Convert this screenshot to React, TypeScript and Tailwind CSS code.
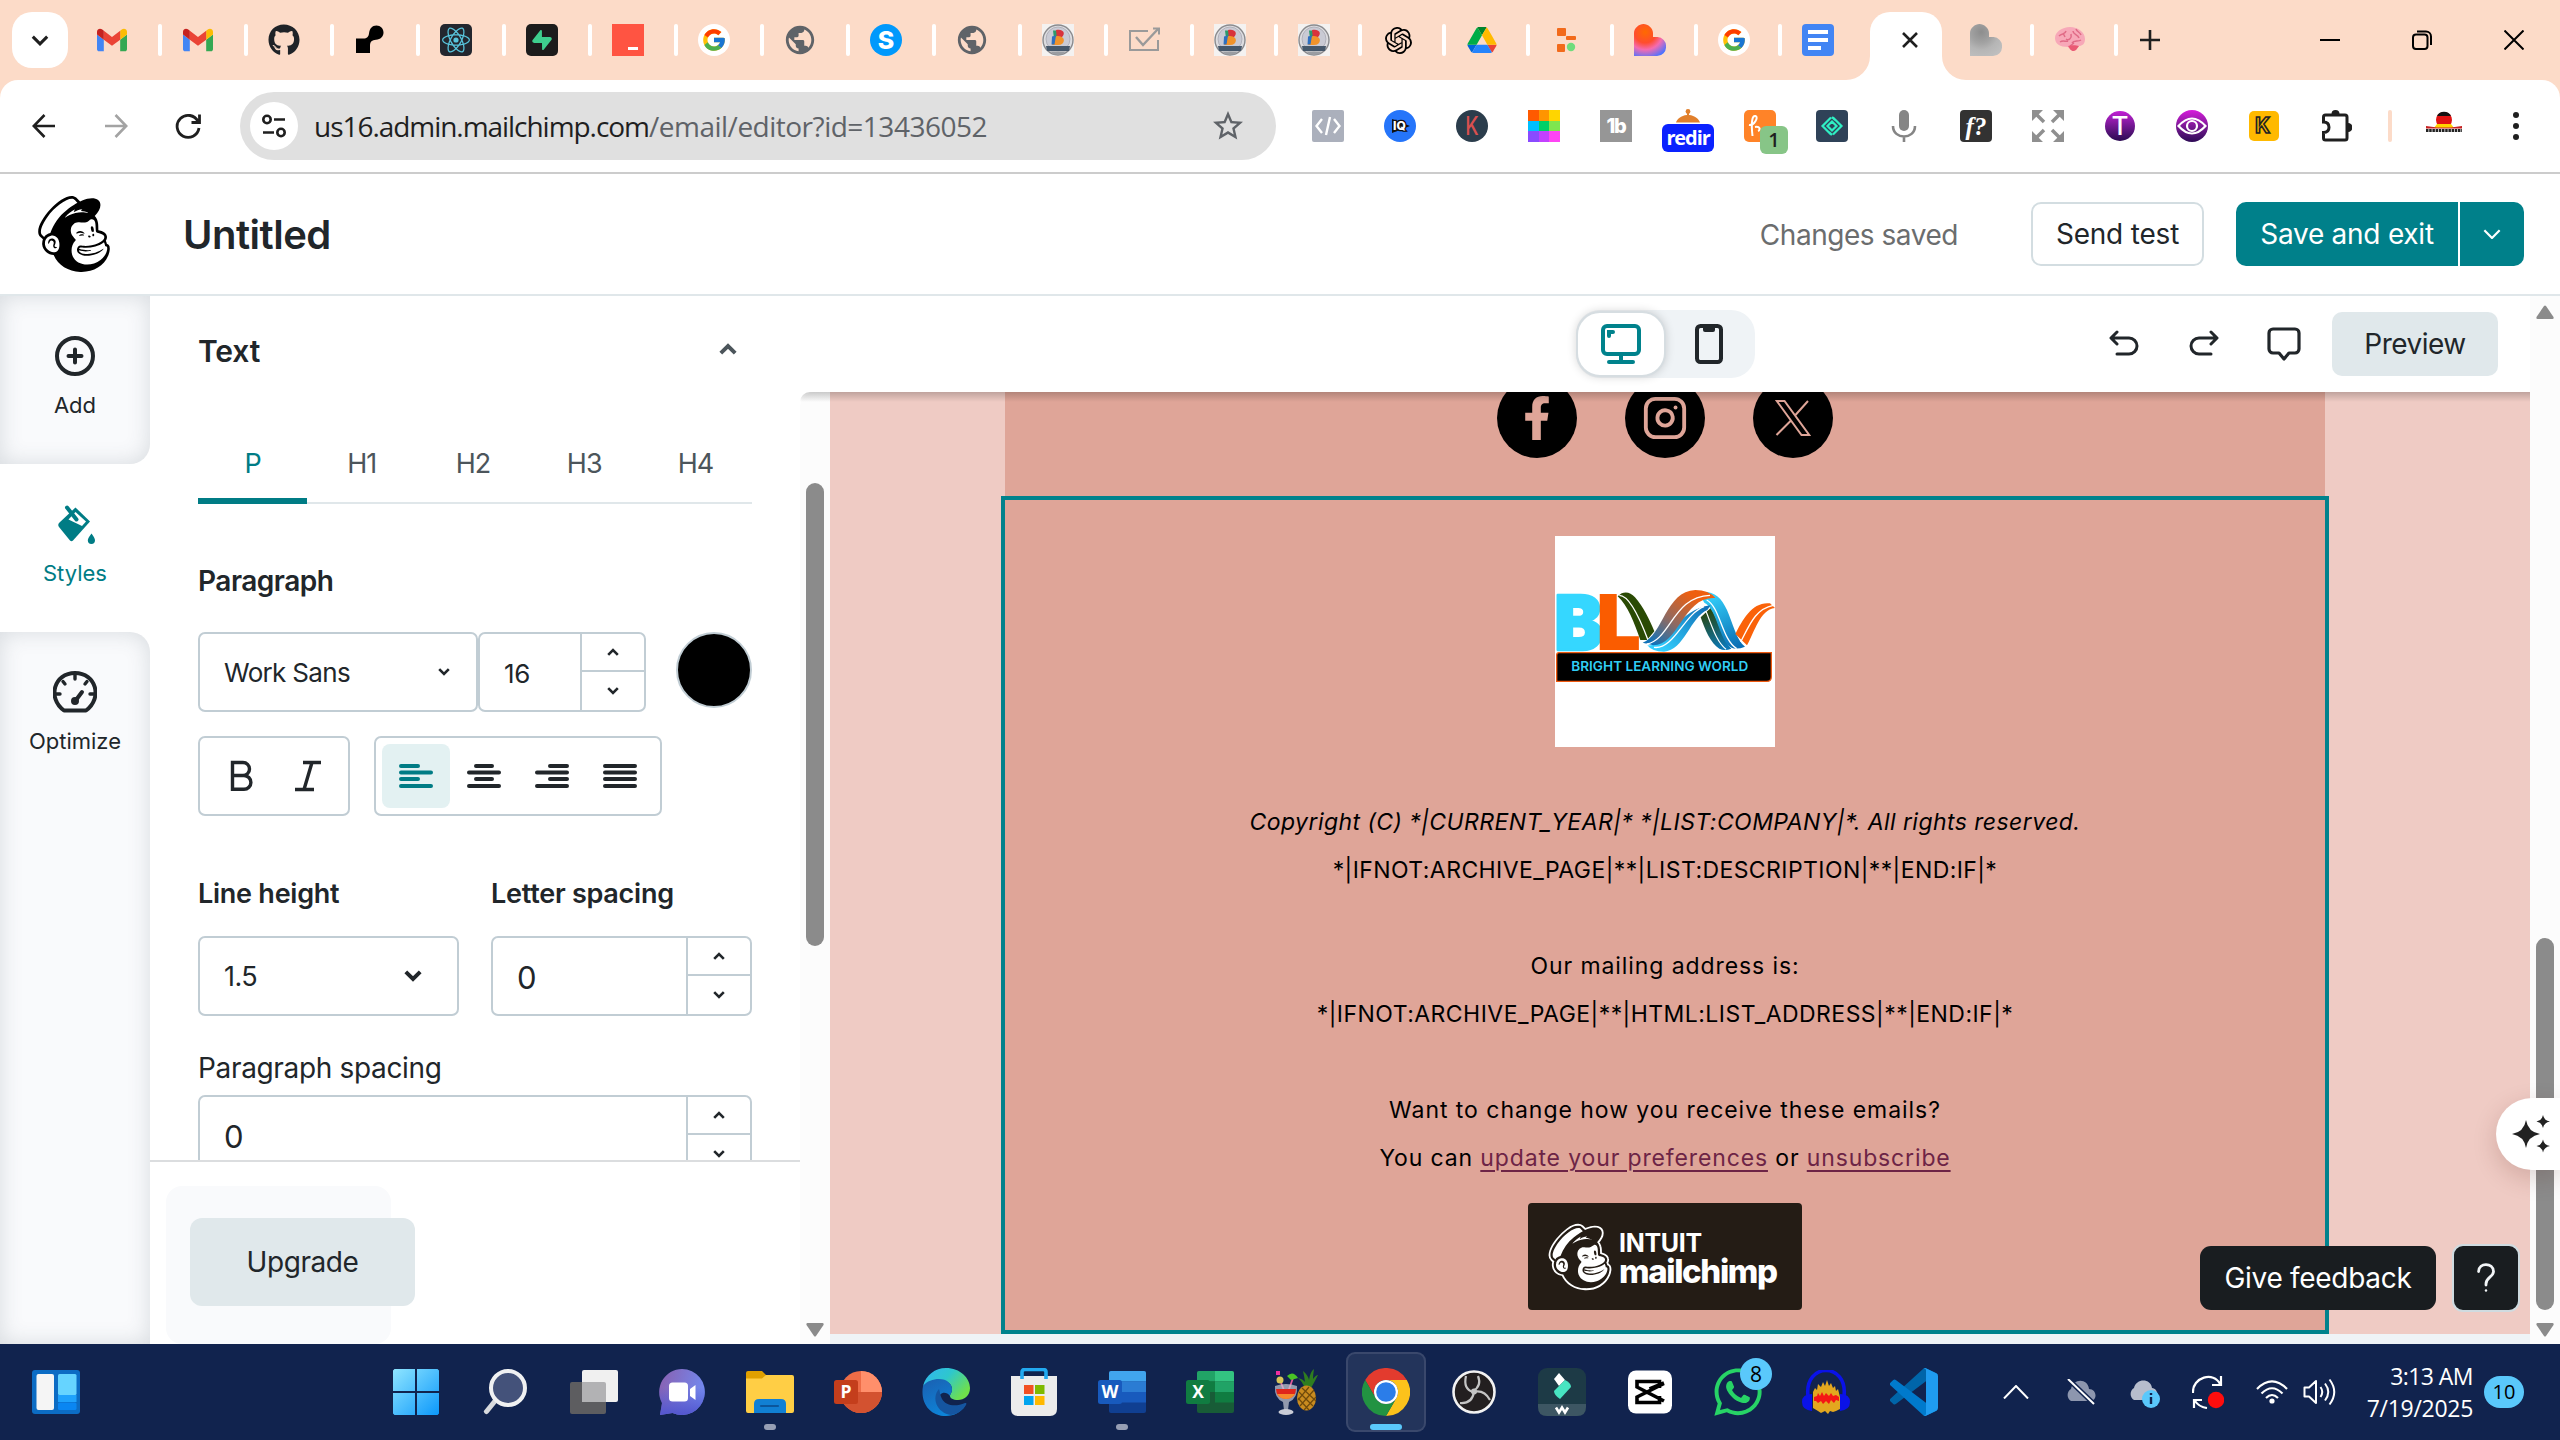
import React from 'react';
import { SiMailchimp, SiReact, SiSupabase, SiOpenai } from 'react-icons/si';
import { FaGithub, FaWhatsapp, FaFacebookF } from 'react-icons/fa';
import { FcGoogle } from 'react-icons/fc';
import { MdPublic, MdStarBorder } from 'react-icons/md';
import { Instagram } from 'lucide-react';

type Kids = { children?: React.ReactNode };

/* ---------- Tab favicons ---------- */

const Gmail = () => (
  <svg viewBox="52 42 88 66" className="h-[24px] w-[30px]">
    <path fill="#4285f4" d="M58 108h14V74L52 59v43c0 3.32 2.69 6 6 6" />
    <path fill="#34a853" d="M120 108h14c3.32 0 6-2.69 6-6V59l-20 15" />
    <path fill="#fbbc04" d="M120 48v26l20-15v-8c0-7.42-8.47-11.65-14.4-7.2" />
    <path fill="#ea4335" d="M72 74V48l24 18 24-18v26L96 92" />
    <path fill="#c5221f" d="M52 51v8l20 15V48l-5.6-4.2c-5.94-4.45-14.4-.22-14.4 7.2" />
  </svg>
);

const Keyhole = () => (
  <svg viewBox="0 0 32 32" className="size-8">
    <path d="M2 14.500h7.500c3.500 0 5-1.500 5.500-5 .5-5 3-8 7.500-8 4 0 7 3 7 7s-3 7-7.500 7.200c-4 .2-6 2-6 5.800V29H2z" fill="#000" />
  </svg>
);

const GoogleRound = () => (
  <div className="flex size-8 items-center justify-center rounded-full bg-white">
    <FcGoogle size={26} />
  </div>
);

const Badge3d = () => (
  <svg viewBox="0 0 32 32" className="size-8">
    <rect width="32" height="32" fill="#f4f2f1" />
    <circle cx="16" cy="16" r="15" fill="#dcdce0" stroke="#8a8a8d" strokeWidth="1.400" />
    <circle cx="16" cy="15" r="12" fill="#c9cad4" stroke="#a9aab2" strokeWidth="0.800" />
    <path d="M11 6.500h5v5l-4 3z" fill="#2c9a6b" />
    <path d="M14 6c7-1.500 10 3 6 7l-5 2z" fill="#d8333c" />
    <path d="M15 12c9-1 9 9 1 9h-6l3-8z" fill="#f0932b" />
    <path d="M10 12.500l4-1-1.500 9h-3z" fill="#2d6fc0" />
    <path d="M4 22h24l-1 5H5z" fill="#46586b" />
    <path d="M8 27.500h16l-4 3h-8z" fill="#9a9da2" />
  </svg>
);

const CheckArrow = () => (
  <svg viewBox="0 0 32 32" className="size-8" fill="none" stroke="#9a9a9a" strokeWidth="2">
    <path d="M20 7H2v19h28V16" />
    <path d="M8 13l7 8L30 5" strokeWidth="2.400" />
    <path d="M25 4.500h6v6" />
  </svg>
);

const Drive = () => (
  <svg viewBox="0 0 87.3 78" className="h-[26px] w-[30px]">
    <path d="m6.600 66.850 3.850 6.650c.8 1.400 1.950 2.500 3.300 3.300l13.750-23.800h-27.500c0 1.550.4 3.100 1.200 4.500z" fill="#0066da" />
    <path d="m43.650 25-13.750-23.800c-1.350.8-2.500 1.900-3.300 3.300l-25.400 44a9.060 9.060 0 0 0 -1.200 4.500h27.500z" fill="#00ac47" />
    <path d="m73.550 76.800c1.350-.8 2.500-1.900 3.300-3.300l1.600-2.750 7.650-13.250c.8-1.400 1.200-2.950 1.200-4.500h-27.502l5.852 11.500z" fill="#ea4335" />
    <path d="m43.650 25 13.750-23.800c-1.350-.8-2.900-1.200-4.500-1.200h-18.500c-1.600 0-3.150.45-4.500 1.200z" fill="#00832d" />
    <path d="m59.800 53h-32.300l-13.750 23.800c1.350.8 2.900 1.200 4.500 1.200h50.800c1.600 0 3.150-.45 4.500-1.200z" fill="#2684fc" />
    <path d="m73.400 26.500-12.700-22c-.8-1.400-1.950-2.500-3.300-3.300l-13.750 23.800 16.150 28h27.450c0-1.550-.4-3.100-1.200-4.500z" fill="#ffba00" />
  </svg>
);

const Blocks = () => (
  <svg viewBox="0 0 32 32" className="size-8">
    <rect x="7" y="4" width="9" height="8" rx="1" fill="#f26a1b" />
    <rect x="16" y="12" width="10" height="4" rx="1" fill="#f26a1b" />
    <rect x="7" y="20" width="8" height="8" rx="1" fill="#f26a1b" />
    <circle cx="21" cy="23" r="4.200" fill="#6fdc7c" />
  </svg>
);

const HeartMark = ({ gray }: { gray?: boolean }) => (
  <svg viewBox="0 0 32 32" className="size-8">
    <defs>
      <radialGradient id={gray ? 'hg' : 'hc'} cx="0.35" cy="0.250" r="0.85">
        <stop offset="0" stopColor={gray ? '#8d8d8d' : '#ff6a00'} />
        <stop offset="0.4" stopColor={gray ? '#a2a2a2' : '#ff4d2e'} />
        <stop offset="0.65" stopColor={gray ? '#b5b5b5' : '#f56bb0'} />
        <stop offset="1" stopColor={gray ? '#bfbfbf' : '#4b73ff'} />
      </radialGradient>
    </defs>
    <path d="M0 9C0 4 5 0 9.500 0S19 4 19 9v4h4.500a9 9 0 0 1 8.500 9.500A9 9 0 0 1 23 32H0z" fill={gray ? 'url(#hg)' : 'url(#hc)'} />
  </svg>
);

const Docs = () => (
  <div className="flex size-8 flex-col justify-center gap-1 rounded-[4px] bg-[#4285f4] pl-1.5">
    <i className="h-1 w-5 bg-white" />
    <i className="h-1 w-5 bg-white" />
    <i className="h-1 w-[13px] bg-white" />
  </div>
);

const Brain = () => (
  <svg viewBox="0 0 32 32" className="size-8">
    <path d="M16 3c8 0 15 5 15 12 0 5-3 7-6 7l-3 4c-5 2-6-1-8-3C6 23 1 20 1 14 1 8 8 3 16 3z" fill="#f7a8b8" />
    <path d="M5 12c3-3 6-1 7-5M12 15c3 2 6-1 5-5M19 7c0 4 5 3 6 7M6 18c3-2 6 0 8-1M18 19c2-3 6-1 9-3M22 5c1 3 4 3 5 6M9 9l2 4M16 22l4-3" stroke="#e06a86" strokeWidth="1.500" fill="none" />
    <path d="M14 22c3-1 8-1 11 0l-3 4c-4 3-6-1-8-4z" fill="#ea5a74" />
  </svg>
);

const Tab = ({ wide, sep = true, children }: Kids & { wide?: boolean; sep?: boolean }) => (
  <div className={wide ? 'flex h-20 w-[86px] items-center pl-5' : 'flex h-20 w-[84px] items-center pl-5'}>
    <div className="flex size-8 items-center justify-center">{children}</div>
    {sep && <div className="ml-auto h-8 w-1 rounded-full bg-white" />}
  </div>
);

const TabStrip = () => (
  <div className="flex h-20 w-full shrink-0 bg-[#fcdbc8]">
    <div className="mt-3 ml-3 flex size-14 items-center justify-center rounded-[20px] bg-white">
      <svg viewBox="0 0 20 14" className="w-[18px]" fill="none" stroke="#1f1f1f" strokeWidth="3.400"><path d="M2 3l8 8 8-8" /></svg>
    </div>
    <div className="ml-2 flex">
      <Tab wide><Gmail /></Tab>
      <Tab wide><Gmail /></Tab>
      <Tab wide><FaGithub size={32} color="#1f2328" /></Tab>
      <Tab wide><Keyhole /></Tab>
      <Tab wide><div className="flex size-8 items-center justify-center rounded-[5px] bg-[#23272f]"><SiReact size={28} color="#58c4dc" /></div></Tab>
      <Tab wide><div className="flex size-8 items-center justify-center rounded-[5px] bg-[#1c1c1c]"><SiSupabase size={20} color="#3ecf8e" /></div></Tab>
      <Tab wide><div className="flex size-8 items-end justify-end bg-[#ff5442] pr-1.5 pb-1.5"><i className="h-[3px] w-2.5 bg-white" /></div></Tab>
      <Tab wide><GoogleRound /></Tab>
      <Tab wide><MdPublic size={34} color="#5f6368" className="shrink-0" /></Tab>
      <Tab wide><div className="flex size-8 items-center justify-center rounded-full bg-[#0099fc] font-['Inter'] text-[25px] leading-none font-extrabold text-white">S</div></Tab>
      <Tab wide><MdPublic size={34} color="#5f6368" className="shrink-0" /></Tab>
      <Tab wide><Badge3d /></Tab>
      <Tab wide><CheckArrow /></Tab>
      <Tab><Badge3d /></Tab>
      <Tab><Badge3d /></Tab>
      <Tab><SiOpenai size={27} color="#000" /></Tab>
      <Tab><Drive /></Tab>
      <Tab><Blocks /></Tab>
      <Tab><HeartMark /></Tab>
      <Tab><GoogleRound /></Tab>
      <Tab sep={false}><Docs /></Tab>
    </div>
    <div className="relative mt-3 mr-2 ml-1 flex h-[68px] w-[72px] items-start justify-center rounded-t-[20px] bg-white pt-5 pl-2">
      <svg viewBox="0 0 24 24" className="absolute bottom-0 -left-6 size-6" fill="#fff"><path d="M24 0V24H0A24 24 0 0 0 24 0Z" /></svg>
      <svg viewBox="0 0 24 24" className="absolute -right-6 bottom-0 size-6" fill="#fff"><path d="M0 0V24H24A24 24 0 0 1 0 0Z" /></svg>
      <svg viewBox="0 0 16 16" className="size-4" stroke="#1f1f1f" strokeWidth="2.600"><path d="M1 1l14 14M15 1L1 15" /></svg>
    </div>
    <Tab><HeartMark gray /></Tab>
    <Tab><Brain /></Tab>
    <div className="flex w-16 items-center justify-center">
      <svg viewBox="0 0 20 20" className="size-5" stroke="#1f1f1f" strokeWidth="2.600"><path d="M10 0v20M0 10h20" /></svg>
    </div>
    <div className="ml-auto flex *:flex *:w-[92px] *:items-center *:justify-center">
      <div><svg viewBox="0 0 20 20" className="size-5" stroke="#000" strokeWidth="2"><path d="M0 10h20" /></svg></div>
      <div><svg viewBox="0 0 20 20" className="size-5" fill="none" stroke="#000" strokeWidth="2"><rect x="1" y="4.500" width="14.500" height="14.500" rx="3" /><path d="M5 1.500h9a5 5 0 0 1 5 5V15" /></svg></div>
      <div><svg viewBox="0 0 20 20" className="size-5" stroke="#000" strokeWidth="2"><path d="M0.500 0.500l19 19M19.500 0.500l-19 19" /></svg></div>
    </div>
  </div>
);

/* ---------- Address bar ---------- */

const Cell = ({ children }: Kids) => <div className="flex h-full w-[72px] shrink-0 items-center justify-center">{children}</div>;

const RAINBOW = ['bg-[#ff5a00]', 'bg-[#ff9500]', 'bg-[#ffd500]', 'bg-[#00bfff]', 'bg-[#00d068]', 'bg-[#7ee64f]', 'bg-[#8a4bff]', 'bg-[#c341ff]', 'bg-[#ff45f5]'];

const AddressBar = () => (
  <div className="h-[94px] w-full shrink-0 bg-[#fcdbc8]">
    <div className="flex h-[94px] items-center rounded-t-[18px] border-b-2 border-[#ccc] bg-white pl-2">
      <Cell><svg viewBox="0 0 24 24" className="size-6" fill="none" stroke="#1f1f1f" strokeWidth="2.600"><path d="M23 12H2M12.500 1L1.800 12l10.700 11" /></svg></Cell>
      <Cell><svg viewBox="0 0 24 24" className="size-6" fill="none" stroke="#a3a3a3" strokeWidth="2.600"><path d="M1 12h21M11.500 1l10.700 11-10.700 11" /></svg></Cell>
      <Cell><svg viewBox="0 0 26 26" className="size-[26px]" fill="none" stroke="#1f1f1f" strokeWidth="2.800"><path d="M23 8.500A11 11 0 1 0 24 15M24.500 1.500v8h-8" /></svg></Cell>
      <div className="ml-4 flex h-[68px] w-[1036px] items-center rounded-full bg-[#e0e0e0] pl-2.5">
        <div className="flex size-12 items-center justify-center rounded-full bg-white">
          <svg viewBox="0 0 26 26" className="size-[26px]" fill="none" stroke="#1f1f1f" strokeWidth="2.600"><circle cx="6" cy="6.500" r="3.700" /><path d="M13 6.500h11M2 19.500h11" /><circle cx="20" cy="19.500" r="3.700" /></svg>
        </div>
        <div className="ml-4 font-['Open_Sans'] text-[28px] whitespace-nowrap text-[#5f6368]">
          <span className="tracking-[-1.04px] text-[#1f1f1f]">us16.admin.mailchimp.com</span><span className="tracking-[-0.5px]">/email/editor?id=13436052</span>
        </div>
        <MdStarBorder size={36} color="#5f6368" className="mr-[30px] ml-auto" />
      </div>
      <div className="ml-4 flex h-full">
        <Cell>
          <div className="flex size-8 items-center justify-center rounded-[2px] bg-[#abb0bc]">
            <svg viewBox="0 0 26 20" className="w-[26px]" fill="none" stroke="#fff" strokeWidth="2.400"><path d="M7 3L1.500 10 7 17M19 3l5.500 7L19 17M15 1l-4 18" /></svg>
          </div>
        </Cell>
        <Cell>
          <div className="flex size-8 items-center justify-center rounded-full bg-[#2575fa]">
            <svg viewBox="0 0 24 20" className="w-6"><path d="M4 3l18 7L4 17z" fill="#111" /><text x="5" y="14.200" fontFamily="Inter" fontWeight="800" fontSize="12" stroke="#111" strokeWidth="2.500" paintOrder="stroke" fill="#fff">IQ</text></svg>
          </div>
        </Cell>
        <Cell><div className="flex size-8 items-center justify-center rounded-full bg-[#2b3d4c] font-['Inter'] text-[26px] leading-none font-medium text-[#d9504f]"><span className="scale-x-75">K</span></div></Cell>
        <Cell><div className="grid size-8 grid-cols-3 grid-rows-3">{RAINBOW.map((c) => <i key={c} className={c} />)}</div></Cell>
        <Cell><div className="flex size-8 items-center justify-center bg-[#969696] font-['Inter'] text-[20px] leading-none font-extrabold tracking-[-1.4px] text-white">1b</div></Cell>
        <Cell>
          <div className="mt-[14px] flex h-12 flex-col items-center">
            <svg viewBox="0 0 26 15" className="h-[15px] w-[26px]" fill="#e17f2b"><circle cx="13" cy="2.500" r="2.400" /><path d="M12 3h2v3c6 .5 10 4 11 7.500H1C2 10 6 6.500 12 6z" /></svg>
            <div className="flex h-7 w-[52px] items-center justify-center rounded-[6px] bg-[#0a22ff] font-['Open_Sans'] text-[20px] leading-none font-bold tracking-[-1.1px] text-white">redir</div>
          </div>
        </Cell>
        <Cell>
          <div className="relative flex size-8 items-center justify-center rounded-[5px] bg-[#ff8328]">
            <svg viewBox="0 0 20 24" className="mr-2 h-6" fill="none" stroke="#fff" strokeWidth="2"><path d="M3 11c5 1 10-8 6.500-9S5 9 6.500 22M9 13c5-1 6 3 3 4" /></svg>
            <div className="absolute top-4 left-4 flex size-7 items-center justify-center rounded-[6px] bg-[#87c587] font-['Open_Sans'] text-[20px] leading-none font-semibold text-[#1f1f1f]">1</div>
          </div>
        </Cell>
        <Cell>
          <div className="flex size-8 items-center justify-center rounded-[4px] bg-[#2f4258]">
            <svg viewBox="0 0 24 24" className="size-6" fill="none" stroke="#2ff0c4" strokeWidth="2.200"><path d="M11 3.500L2.500 12l8.500 8.500M13 3.500l8.500 8.500-8.500 8.500M12 7.500L7.500 12l4.500 4.500 4.500-4.500zM12 3l3 3M12 21l-3-3" /></svg>
          </div>
        </Cell>
        <Cell><svg viewBox="0 0 26 32" className="h-8" fill="none" stroke="#858585" strokeWidth="2.600"><rect x="8" y="0" width="10" height="21" rx="5" fill="#858585" stroke="none" /><path d="M2 16c0 14 22 14 22 0M13 26v6" /></svg></Cell>
        <Cell><div className="flex size-8 items-center justify-center rounded-[4px] bg-[#323232] font-['Liberation_Serif'] text-[25px] leading-none font-bold text-white italic">f?</div></Cell>
        <Cell>
          <svg viewBox="0 0 32 32" className="size-8" fill="#8f8f8f" stroke="#8f8f8f" strokeWidth="3.500">
            <path d="M4 4l8 8M28 4l-8 8M4 28l8-8M28 28l-8-8" />
            <path stroke="none" d="M0 0h11L0 11zM32 0v11L21 0zM0 32V21l11 11zM32 32H21l11-11z" />
          </svg>
        </Cell>
        <Cell><div className="flex size-[30px] items-center justify-center rounded-full bg-linear-to-b from-[#c31fd6] to-[#2b0a52] font-['Inter'] text-[26px] leading-none font-medium text-white">T</div></Cell>
        <Cell>
          <div className="flex size-8 items-center justify-center rounded-full bg-linear-to-b from-[#d819dd] to-[#2d0a55]">
            <svg viewBox="0 0 30 18" className="w-[30px]" fill="none" stroke="#fff" strokeWidth="2.200"><path d="M1.500 9Q15-6 28.500 9 15 24 1.500 9z" /><circle cx="15" cy="9" r="5" /></svg>
          </div>
        </Cell>
        <Cell>
          <div className="flex size-[30px] items-center justify-center rounded-[5px] bg-[#ffb900]">
            <svg viewBox="0 0 30 30" className="size-[30px]"><text x="6" y="22" fontFamily="Inter" fontWeight="700" fontSize="21" fill="#ffb900" stroke="#222" strokeWidth="1.600">K</text></svg>
          </div>
        </Cell>
        <Cell>
          <svg viewBox="0 0 32 32" className="size-8" fill="none" stroke="#1f1f1f" strokeWidth="3">
            <path d="M3.500 12V7q0-2 2-2H25q2 0 2 2v21q0 2-2 2H5.500q-2 0-2-2v-5.500c4 0 5.500-2.500 5.500-5.200S7.500 12 3.500 12z" />
            <path d="M11.500 4a4 4 0 0 1 8 0zM28 13a4 4 0 0 1 0 9z" fill="#1f1f1f" stroke="none" />
          </svg>
        </Cell>
      </div>
      <div className="ml-4 h-8 w-1 rounded-full bg-[#fcdbc8]" />
      <div className="ml-4 flex h-full">
        <Cell>
          <svg viewBox="0 0 38 22" className="mb-2 w-[38px]">
            <circle cx="19" cy="9" r="8" fill="#e01212" />
            <path d="M12 5a8 8 0 0 1 14 0z" fill="#111" />
            <path d="M12 13h14l3 4H9z" fill="#ffd400" />
            <path d="M1 15l11 1.500h14L37 15v2.500H1z" fill="#c62020" />
            <path d="M1 19.500h36" stroke="#222" strokeWidth="3" strokeDasharray="2.500 0.700" />
          </svg>
        </Cell>
        <Cell><div className="flex flex-col gap-[5px] *:size-1.5 *:rounded-full *:bg-[#1f1f1f]"><i /><i /><i /></div></Cell>
      </div>
    </div>
  </div>
);

/* ---------- Editor ---------- */

const Header = () => (
  <div className="flex h-[122px] shrink-0 items-center border-b-2 border-[#e0e7ea] bg-white pr-9 pl-9 font-['Inter'] text-[#21262a]">
    <SiMailchimp size={76} color="#000" />
    <div className="ml-[71px] pt-0.5 text-[40px] font-semibold tracking-[-0.5px]">Untitled</div>
    <div className="ml-auto pt-px text-[28px] tracking-[-0.46px] text-[#6b6d6e]">Changes saved</div>
    <div className="ml-[73px] flex h-16 w-[173px] items-center justify-center rounded-[10px] border-2 border-[#d3dde1] text-[28px] tracking-[-0.2px]">Send test</div>
    <div className="ml-8 flex h-16 overflow-hidden rounded-[10px] text-white">
      <div className="flex w-[222px] items-center justify-center bg-[#00808a] text-[28px] tracking-[-0.25px]">Save and exit</div>
      <div className="ml-0.5 flex w-16 items-center justify-center bg-[#00808a]">
        <svg viewBox="0 0 20 12" className="w-[18px]" fill="none" stroke="#fff" strokeWidth="2.400"><path d="M1.500 1.500L10 10l8.500-8.500" /></svg>
      </div>
    </div>
  </div>
);

const RailItem = ({ label, active, children }: Kids & { label: string; active?: boolean }) => (
  <div className={active ? 'flex flex-col items-center pt-10 text-[#007c85]' : 'flex flex-col items-center pt-10 text-[#21262a]'}>
    <div className="flex size-10 items-center justify-center">{children}</div>
    <div className="mt-[13px] text-[22px] leading-8">{label}</div>
  </div>
);

const Rail = () => (
  <div className="flex w-[150px] shrink-0 flex-col bg-white font-['Inter']">
    <div className="h-[168px] rounded-br-[20px] bg-[#f9fafc] shadow-[inset_0_0_22px_rgba(60,80,90,0.18)]">
      <RailItem label="Add">
        <svg viewBox="0 0 40 40" className="size-10" fill="none" stroke="currentColor" strokeWidth="4" strokeLinecap="round"><circle cx="20" cy="20" r="18" /><path d="M20 13.500v13M13.500 20h13" /></svg>
      </RailItem>
    </div>
    <div className="h-[168px]">
      <RailItem label="Styles" active>
        <svg viewBox="0 0 40 40" className="size-10 shrink-0">
          <path d="M20.500 3.500L35 17.500 18 36.500Q16.500 38 15 36.500L4 23Q2.500 21 4 19z" fill="currentColor" />
          <path d="M20.500 8L31 17.500 27 22 13.500 15.500z" fill="#fff" />
          <path d="M12 3.500l9.500 12" stroke="currentColor" strokeWidth="4" strokeLinecap="round" />
          <path d="M36.500 29.500c2 3 3.500 5 3.500 6.800a3.600 3.600 0 0 1-7.200 0c0-1.800 1.700-3.800 3.700-6.800z" fill="currentColor" />
        </svg>
      </RailItem>
    </div>
    <div className="flex-1 rounded-tr-[20px] bg-[#f9fafc] shadow-[inset_0_0_22px_rgba(60,80,90,0.18)]">
      <RailItem label="Optimize">
        <svg viewBox="0 0 44 42" className="h-[42px] w-11 shrink-0" fill="none" stroke="currentColor" strokeWidth="4" strokeLinecap="round" strokeLinejoin="round">
          <path d="M11 39.500C-6 27 1 2 22 2s28 25 11 37.500z" />
          <path d="M22 3v5M3 23h4M37 23h4M10 10.500l2 2.500M34 10.500l-2 2.500" strokeWidth="3.400" />
          <path d="M29 21l-6 8" /><circle cx="22" cy="30" r="2" fill="currentColor" />
        </svg>
      </RailItem>
    </div>
  </div>
);

const Chevron = ({ up, big }: { up?: boolean; big?: boolean }) => (
  <svg viewBox="0 0 12 8" className={big ? 'w-[18px]' : 'w-3'} fill="none" stroke="currentColor" strokeWidth="2.600" strokeLinecap="butt">
    <path d={up ? 'M1.200 6.800L6 2l4.800 4.800' : 'M1.200 1.200L6 6l4.800-4.800'} />
  </svg>
);

const Stepper = () => (
  <div className="ml-auto flex h-full w-[64px] flex-col border-l-2 border-[#c1cdd4]">
    <div className="flex h-[38px] items-center justify-center border-b-2 border-[#c1cdd4] pb-px"><Chevron up /></div>
    <div className="flex h-[38px] items-center justify-center"><Chevron /></div>
  </div>
);

const FIELD = 'flex h-20 items-center rounded-[7px] border-2 border-[#c1cdd4]';

const AlignIcon = ({ kind }: { kind: 'left' | 'center' | 'right' | 'full' }) => {
  const short = { left: 'M2 2h17M2 15h17', center: 'M9 2h16M9 15h16', right: 'M15 2h17M15 15h17', full: 'M2 2h30M2 15h30' }[kind];
  return (
    <svg viewBox="0 0 34 24" className="w-[34px]" fill="none" stroke="currentColor" strokeWidth="4" strokeLinecap="round">
      <path d={short} /><path d="M2 8.600h30M2 22h30" />
    </svg>
  );
};

const StylePanel = () => (
  <div className="flex w-[650px] shrink-0 flex-col bg-white font-['Inter'] text-[#21262a]">
    <div className="h-[864px] overflow-hidden px-12">
      <div className="flex h-[110px] items-center justify-between pr-[15px]">
        <span className="text-[30px] font-semibold tracking-[-0.1px]">Text</span>
        <span className="pb-1 text-[#4c555b]"><Chevron up big /></span>
      </div>
      <div className="mt-4 flex h-[82px] text-[27px] tracking-[-1px] text-[#4c555b]">
        <div className="flex flex-1 items-center justify-center border-b-6 border-[#007c85] pt-2 text-[#007c85]">P</div>
        {['H1', 'H2', 'H3', 'H4'].map((h) => (
          <div key={h} className="flex flex-1 items-center justify-center border-b-2 border-[#e0e7ea] pt-1 pr-0.5">{h}</div>
        ))}
      </div>
      <div className="mt-[57px] text-[28px] leading-10 font-semibold tracking-[-0.5px]">Paragraph</div>
      <div className="mt-[31px] flex">
        <div className={`${FIELD} w-[280px] justify-between pr-[26px] pl-6`}>
          <span className="text-[26px] tracking-[-0.67px]">Work Sans</span><Chevron />
        </div>
        <div className={`${FIELD} w-[168px] pl-6`}><span className="pt-0.5 text-[26px] tracking-[-0.35px]">16</span><Stepper /></div>
        <div className="ml-auto size-[76px] rounded-full border-2 border-[#c1cdd4] bg-black" />
      </div>
      <div className="mt-6 flex gap-6">
        <div className={`${FIELD} px-1.5 *:flex *:w-[68px] *:items-center *:justify-center`}>
          <div className="pl-1"><svg viewBox="0 0 24 32" className="h-8 w-6" fill="none" stroke="currentColor" strokeWidth="3.400"><path d="M2.500 2.500H13a6.500 6.500 0 0 1 0 13H2.500zM2.500 15.500H14a6.800 6.800 0 0 1 0 13.800H2.500z" /></svg></div>
          <div><svg viewBox="0 0 28 32" className="h-8 w-7" fill="none" stroke="currentColor" strokeWidth="3.400"><path d="M9 2.500h18M1 29.500h19M18 2.500L10 29.500" /></svg></div>
        </div>
        <div className={`${FIELD} px-1.5 *:flex *:h-16 *:w-[68px] *:items-center *:justify-center`}>
          <div className="rounded-[8px] bg-[#e3f1f2] text-[#007c85]"><AlignIcon kind="left" /></div>
          <div><AlignIcon kind="center" /></div>
          <div><AlignIcon kind="right" /></div>
          <div><AlignIcon kind="full" /></div>
        </div>
      </div>
      <div className="mt-[58px] grid grid-cols-2 gap-x-8 text-[27px] leading-10 font-semibold tracking-[-0.25px]">
        <span>Line height</span><span>Letter spacing</span>
      </div>
      <div className="mt-[22px] grid grid-cols-2 gap-x-8">
        <div className={`${FIELD} justify-between pr-[35px] pl-6`}><span className="pt-0.5 text-[27px] tracking-[-0.6px]">1.5</span><Chevron big /></div>
        <div className={`${FIELD} pl-6`}><span className="pt-1 text-[31px]">0</span><Stepper /></div>
      </div>
      <div className="mt-8 text-[28px] leading-10 tracking-[-0.34px]">Paragraph spacing</div>
      <div className={`${FIELD} mt-[7px] pl-6`}><span className="pt-1 text-[31px]">0</span><Stepper /></div>
    </div>
    <div className="flex-1 border-t-2 border-[#dbdddf] pt-6 pl-4">
      <div className="h-[158px] w-[225px] rounded-[16px] bg-[#f9fafc] pt-8 pl-6">
        <div className="flex h-[88px] w-[225px] items-center justify-center rounded-[12px] bg-[#e0e8eb] text-[28px] tracking-[-0.41px]">Upgrade</div>
      </div>
    </div>
  </div>
);

const CanvasBar = () => (
  <div className="flex h-24 w-full shrink-0 items-center bg-white text-[#21262a]">
    <div className="ml-[776px] flex h-[68px] w-[179px] items-center rounded-[24px] bg-[#eff3f6]">
      <div className="flex h-[66px] w-[90px] items-center justify-center rounded-[24px] border-2 border-[#d6dde1] bg-white shadow-[0_0_10px_rgba(0,0,0,0.16)]">
        <svg viewBox="0 0 40 40" className="size-10" fill="none" stroke="#00828c" strokeWidth="4" strokeLinecap="round"><rect x="2" y="2" width="36" height="28" rx="4" /><path d="M20 30v8M8 38h24M8 12V8h4" /></svg>
      </div>
      <div className="flex flex-1 items-center justify-center pr-1">
        <svg viewBox="0 0 28 40" className="h-10 w-7" fill="none" stroke="#21262a" strokeWidth="4"><rect x="2" y="2" width="24" height="36" rx="3.500" /><path d="M8 2h12v4q0 2-2 2h-8q-2 0-2-2z" fill="#21262a" stroke="none" /></svg>
      </div>
    </div>
    <div className="ml-auto flex items-center">
      <svg viewBox="0 0 30 26" className="mb-0.5 h-[26px] w-[30px]" fill="none" stroke="currentColor" strokeWidth="3" strokeLinecap="round" strokeLinejoin="round"><path d="M8 2L2 8l6 6M2.500 8H20a8 8 0 0 1 0 16H8" /></svg>
      <svg viewBox="0 0 30 26" className="mb-0.5 ml-[50px] h-[26px] w-[30px]" fill="none" stroke="currentColor" strokeWidth="3" strokeLinecap="round" strokeLinejoin="round"><path d="M22 2l6 6-6 6M27.500 8H10a8 8 0 0 0 0 16h12" /></svg>
      <svg viewBox="0 0 34 34" className="ml-[48px] size-[34px]" fill="none" stroke="currentColor" strokeWidth="3.200" strokeLinejoin="round"><path d="M6 2h22a4 4 0 0 1 4 4v16a4 4 0 0 1-4 4h-6l-5 6-5-6H6a4 4 0 0 1-4-4V6a4 4 0 0 1 4-4z" /></svg>
      <div className="mr-8 ml-[31px] flex h-16 w-[166px] items-center justify-center rounded-[10px] bg-[#e0e8eb] font-['Inter'] text-[28px] tracking-[-0.5px]">Preview</div>
    </div>
  </div>
);

const Arrow = ({ up }: { up?: boolean }) => (
  <svg viewBox="0 0 18 14" className="h-3.5 w-[18px]" fill="#8b8b8b"><path d={up ? 'M8 1q1-1.200 2 0l7.500 11q.5 2-1 2h-15q-1.500 0-1-2z' : 'M8 13q1 1.200 2 0l7.500-11q.5-2-1-2h-15q-1.500 0-1 2z'} /></svg>
);

const BlwLogo = () => (
  <svg viewBox="315 468 660 633" preserveAspectRatio="none" className="h-[211px] w-[220px] bg-white">
    <defs>
      <linearGradient id="up" gradientUnits="userSpaceOnUse" x1="720" y1="640" x2="610" y2="790"><stop offset="0" stopColor="#ee5f10" /><stop offset="0.55" stopColor="#8d6a63" /><stop offset="1" stopColor="#1272b8" /></linearGradient>
      <linearGradient id="low" gradientUnits="userSpaceOnUse" x1="760" y1="680" x2="630" y2="810"><stop offset="0" stopColor="#1272b8" /><stop offset="1" stopColor="#33d0ff" /></linearGradient>
      <linearGradient id="down" gradientUnits="userSpaceOnUse" x1="780" y1="650" x2="850" y2="805"><stop offset="0" stopColor="#33cdf8" /><stop offset="1" stopColor="#0a6fb5" /></linearGradient>
      <linearGradient id="deep" gradientUnits="userSpaceOnUse" x1="770" y1="690" x2="815" y2="805"><stop offset="0" stopColor="#2a4408" /><stop offset="1" stopColor="#0a78b5" /></linearGradient>
    </defs>
    <text x="313" y="809" fontFamily="Inter" fontWeight="900" fontSize="228" textLength="146" lengthAdjust="spacingAndGlyphs" fill="#35d7ff" stroke="#35d7ff" strokeWidth="7" strokeLinejoin="round">B</text>
    <text x="442" y="808" fontFamily="Inter" fontWeight="900" fontSize="222" textLength="128" lengthAdjust="spacingAndGlyphs" fill="#fa5c00" stroke="#fa5c00" strokeWidth="6">L</text>
    <path d="M515 640q22-8 40 12c25 28 45 70 58 102l-22 26h-20c-18-50-38-105-68-131z" fill="#2a4a04" />
    <path d="M508 646c30 0 62 70 86 134" stroke="#fff" strokeWidth="4" fill="none" />
    <path d="M752 712l30-28c18 22 32 88 62 122q-20 8-36 0c-26-14-44-60-56-94z" fill="url(#deep)" />
    <path d="M768 694c20 50 32 92 60 114" stroke="#fff" strokeWidth="3.500" fill="none" />
    <path d="M745 636c45-6 68 14 86 54s28 90 54 110q-34 14-52-6c-26-30-36-110-70-126z" fill="url(#down)" />
    <path d="M770 660c40 20 46 120 90 146" stroke="#fff" strokeWidth="4" fill="none" />
    <path d="M592 796c60 6 90-110 190-120l-10 14c-50 20-70 122-130 125q-36 0-50-19z" fill="url(#low)" />
    <path d="M612 802c60 8 90-100 150-122" stroke="#fff" strokeWidth="4" fill="none" />
    <path d="M578 788c60-20 70-156 158-158q40 0 60 24c-96-6-110 142-186 142z" fill="url(#up)" />
    <path d="M590 792c70-10 80-144 190-146" stroke="#fff" strokeWidth="4" fill="none" />
    <path d="M856 762c22-44 52-98 104-92l15 14c-46 6-60 70-84 112z" fill="#fa6209" />
    <path d="M872 786c26-50 44-100 98-110" stroke="#fff" strokeWidth="4" fill="none" />
    <path d="M327 818h637v72q0 14-14 14H320v-78q0-8 7-8z" fill="#000" stroke="#f05a10" strokeWidth="4" />
    <text x="364" y="873" fontFamily="Inter" fontWeight="600" fontSize="41" textLength="531" lengthAdjust="spacingAndGlyphs" fill="#30cdf5">BRIGHT LEARNING WORLD</text>
  </svg>
);

const MailchimpBadge = () => (
  <div className="mt-[21px] flex h-[107px] w-[274px] items-center rounded-[4px] bg-[#241c15] pl-[18px] font-['Inter'] text-white">
    <svg viewBox="-1 -1 26 26" className="h-[68px] w-[68px] shrink-0">
      <path d="M1.600 12C2 7 7 1 11.500 1.200L13 2 9 5.500 3 13zM11 9c2-2 6-1 8-1l2 4 2 4c-1 4-3 6-6 6s-6-3-6-6l1-3z" fill="#fff" />
      <ellipse cx="4.800" cy="15.200" rx="2.300" ry="2.800" fill="#fff" />
      <SiMailchimp x={0} y={0} size={24} overflow="visible" color="#fff" stroke="#fff" strokeWidth={1.4} />
      <SiMailchimp x={0} y={0} size={24} color="#241c15" />
    </svg>
    <div className="ml-[5px] flex flex-col pt-1">
      <span className="text-[25px] leading-[25px] font-bold tracking-[-0.3px]">INTUIT</span>
      <span className="text-[33px] leading-[30px] font-extrabold tracking-[-1.4px]">mailchimp</span>
    </div>
  </div>
);

const LINK = 'text-[#6d2446] underline decoration-2 underline-offset-[4px]';

const Email = () => (
  <div className="flex h-[942px] w-[1700px] overflow-hidden bg-[#efcbc4] pl-[171px]">
    <div className="-mt-3.5 w-[1328px] shrink-0 font-['Inter'] text-[23px] leading-[48px] text-black">
      <div className="mx-1 flex h-[118px] justify-center gap-12 bg-[#dfa598] text-[#dfa598] *:flex *:size-20 *:items-center *:justify-center *:rounded-full *:bg-black">
        <div><FaFacebookF size={44} /></div>
        <div><Instagram size={46} strokeWidth={2} /></div>
        <div>
          <svg viewBox="0 0 36 36" className="size-9" fill="none" stroke="currentColor" strokeWidth="2"><path d="M1.800 1h7.700L34.200 35h-7.700zM33 1L20 15.500M16 20.500L1.500 35" /></svg>
        </div>
      </div>
      <div className="flex h-[838px] flex-col items-center border-4 border-[#00828c] bg-[#dfa598] pt-9">
        <BlwLogo />
        <p className="mt-[51px] tracking-[0.43px] italic">Copyright (C) *|CURRENT_YEAR|* *|LIST:COMPANY|*. All rights reserved.</p>
        <p className="tracking-[0.42px]">*|IFNOT:ARCHIVE_PAGE|**|LIST:DESCRIPTION|**|END:IF|*</p>
        <p className="mt-12 tracking-[0.91px]">Our mailing address is:</p>
        <p className="tracking-[0.46px]">*|IFNOT:ARCHIVE_PAGE|**|HTML:LIST_ADDRESS|**|END:IF|*</p>
        <p className="mt-12 tracking-[0.96px]">Want to change how you receive these emails?</p>
        <p className="tracking-[0.86px]">
          You can <span className={LINK}>update your preferences</span> or <span className={LINK}>unsubscribe</span>
        </p>
        <MailchimpBadge />
      </div>
    </div>
  </div>
);

const Canvas = () => (
  <div className="relative flex min-w-0 flex-1 flex-col">
    <div className="flex flex-1">
      <div className="flex w-[1730px] flex-col bg-white">
        <CanvasBar />
        <div className="relative flex h-[952px]">
          <div className="flex h-full w-[30px] flex-col items-center rounded-tl-[16px] bg-[#fcfcfc] pt-[91px]">
            <div className="h-[463px] w-[18px] rounded-full bg-[#8b8b8b]" />
            <div className="mt-auto mb-[7px]"><Arrow /></div>
          </div>
          <div className="h-full bg-[#eff3f6]"><Email /></div>
          <div className="absolute inset-x-0 top-0 h-2.5 rounded-tl-[16px] bg-linear-to-b from-black/20 to-transparent" />
        </div>
      </div>
      <div className="flex w-[30px] flex-col items-center bg-[#fcfcfc] pt-[9px]">
        <Arrow up />
        <div className="mt-[619px] h-[372px] w-[18px] rounded-full bg-[#8b8b8b]" />
        <div className="mt-auto mb-[7px]"><Arrow /></div>
      </div>
    </div>
    <div className="absolute top-[802px] right-0 flex h-[72px] w-16 items-center rounded-l-full bg-white pl-4 shadow-[0_8px_24px_rgba(80,20,10,0.18)]">
      <svg viewBox="0 0 40 40" className="size-10" fill="#222"><path d="M14 6Q16 18 28 20 16 22 14 34 12 22 0 20 12 18 14 6zM31 1q1 5.500 7 6.500-6 1-7 6.500-1-5.500-6.500-6.500Q30 6.500 31 1zM31 25.500q1 5.500 7 6.500-6 1-7 6.500-1-5.500-6.500-6.500 5.500-1 6.500-6.500z" /></svg>
    </div>
    <div className="absolute right-10 bottom-[34px] flex items-center gap-4 font-['Inter'] text-white">
      <div className="flex h-16 w-[236px] items-center justify-center rounded-[11px] bg-[#191d20] text-[28px] tracking-[-0.3px]">Give feedback</div>
      <div className="-my-0.5 flex size-[68px] items-center justify-center rounded-[11px] border-2 border-[#cfdbe0] bg-[#191d20]">
        <svg viewBox="0 0 18 30" className="h-[30px]" fill="none" stroke="#f2f5f7" strokeWidth="2.800" strokeLinecap="round"><path d="M1.600 8.500C1.600-1 16.500-.5 16.500 8.500 16.500 14 9 14 9 21v1" /><circle cx="9" cy="27.500" r="1.200" fill="#f2f5f7" stroke="none" /></svg>
      </div>
    </div>
  </div>
);

/* ---------- Taskbar ---------- */

const Slot = ({ children, dot, active }: Kids & { dot?: boolean; active?: boolean }) => (
  <div className="flex h-24 w-[88px] items-center justify-center">
    <div className={active ? 'relative flex size-20 items-center justify-center rounded-[9px] border-2 border-white/10 bg-white/8' : 'relative flex size-20 items-center justify-center'}>
      {children}
      {dot && <i className="absolute bottom-0.5 left-1/2 h-1.5 w-3 -translate-x-1/2 rounded-full bg-[#979fb4]" />}
      {active && <i className="absolute bottom-0 left-1/2 h-1.5 w-8 -translate-x-1/2 rounded-full bg-[#5ac8fb]" />}
    </div>
  </div>
);

const OfficeLetter = ({ color, x, y, children }: Kids & { color: string; x: number; y: number }) => (
  <g>
    <rect x={x} y={y} width="24" height="24" rx="2.500" fill={color} />
    <text x={x + 12} y={y + 18} textAnchor="middle" fontFamily="Open Sans" fontWeight="700" fontSize="17.500" fill="#fff">{children}</text>
  </g>
);

const Taskbar = () => (
  <div className="flex h-24 w-full shrink-0 items-center bg-[#11234e] text-white">
    <svg viewBox="0 0 48 44" className="ml-8 h-11 w-12">
      <rect width="48" height="44" rx="3" fill="#0c6cc4" />
      <rect x="4.500" y="4" width="17.500" height="36" rx="2" fill="#f5f5f5" />
      <rect x="26" y="4" width="18.500" height="21" rx="1.500" fill="#66d4ff" />
      <rect x="26" y="25" width="18.500" height="7" fill="#1fa2fc" />
      <rect x="26" y="32.500" width="18.500" height="7.500" rx="1.500" fill="#0a86f2" />
    </svg>
    <div className="ml-[294px] flex">
      <Slot>
        <svg viewBox="0 0 46 46" className="mr-1 size-[46px]">
          <defs><linearGradient id="win" x1="0" y1="0" x2="46" y2="46" gradientUnits="userSpaceOnUse"><stop offset="0" stopColor="#8fe5ff" /><stop offset="1" stopColor="#0c98fb" /></linearGradient></defs>
          <path d="M1.500 0H22v22H0V1.500zM24 0h20.500L46 1.500V22H24zM0 24h22v22H1.500L0 44.500zM24 24h22v20.500L44.500 46H24z" fill="url(#win)" />
        </svg>
      </Slot>
      <Slot>
        <svg viewBox="0 0 46 46" className="size-[46px]" fill="none" strokeLinecap="round"><path d="M3.500 42.500L12 32" stroke="#d8dadd" strokeWidth="5" /><circle cx="25" cy="19" r="17" fill="#44527a" stroke="#f0f1f2" strokeWidth="4" /></svg>
      </Slot>
      <Slot>
        <svg viewBox="0 0 48 44" className="h-11 w-12"><rect x="0" y="12" width="36" height="32" rx="2" fill="#5d5d60" /><rect x="12" y="0" width="36" height="32" rx="2" fill="#f0f0f0" /><path d="M12 12h22q2 0 2 2v18H12z" fill="#b2b2b4" /></svg>
      </Slot>
      <Slot>
        <svg viewBox="0 0 46 46" className="size-[46px]">
          <defs><linearGradient id="chat" x1="0" y1="0" x2="1" y2="0.300"><stop offset="0" stopColor="#8a5fae" /><stop offset="1" stopColor="#7388ee" /></linearGradient><linearGradient id="chat2" x1="0" y1="0" x2="0" y2="1"><stop offset="0.400" stopColor="#5058d0" stopOpacity="0" /><stop offset="1" stopColor="#5356cf" /></linearGradient></defs>
          <path d="M23 0a23 23 0 1 1-9.500 44L1 46 3 34A23 23 0 0 1 23 0z" fill="url(#chat)" />
          <path d="M23 0a23 23 0 1 1-9.500 44L1 46 3 34A23 23 0 0 1 23 0z" fill="url(#chat2)" />
          <rect x="10" y="13.500" width="19" height="19" rx="3.500" fill="#fff" /><path d="M31 20l5.500-4v15L31 27z" fill="#fff" />
        </svg>
      </Slot>
      <Slot dot>
        <svg viewBox="0 0 48 44" className="h-11 w-12">
          <path d="M0 3q0-2 2-2h14l5 5v6H0z" fill="#e0a000" />
          <path d="M0 8.500h16l4-3.500h26q2 0 2 2v34q0 2-2 2H2q-2 0-2-2z" fill="#ffce45" />
          <path d="M8 43V34q0-5 5-5h22q5 0 5 5v9z" fill="#1180d4" /><path d="M15 36h17" stroke="#0b569c" strokeWidth="2.200" strokeLinecap="round" />
        </svg>
      </Slot>
      <Slot>
        <svg viewBox="0 0 48 44" className="h-11 w-12">
          <circle cx="27" cy="22" r="21" fill="#ed6c47" /><path d="M27 1a21 21 0 0 1 21 21H27z" fill="#ff8f6b" /><path d="M48 22a21 21 0 0 1-42 0z" fill="#d35230" />
          <OfficeLetter color="#c43e1c" x={0} y={10}>P</OfficeLetter>
        </svg>
      </Slot>
      <Slot>
        <svg viewBox="0 0 48 48" className="size-12">
          <defs>
            <linearGradient id="e1" x1="0" y1="0" x2="1" y2="0.600"><stop offset="0" stopColor="#31b5f5" /><stop offset="0.500" stopColor="#2ec7cd" /><stop offset="1" stopColor="#6fe04b" /></linearGradient>
            <linearGradient id="e2" x1="0" y1="0" x2="0.600" y2="1"><stop offset="0" stopColor="#1b5fb0" /><stop offset="1" stopColor="#0c87dc" /></linearGradient>
          </defs>
          <path d="M1 18C4 7 13 0 24 0c14 0 24 10 24 20 0 8-6 12-12 12-5 0-8-2-8-4s2-3 2-7c0-5-5-9-12-9-8 0-14 4-17 6z" fill="url(#e1)" />
          <path d="M1 18c4-5 10-7 16-7 8 0 13 5 13 10 0 4-2 5-2 7-5-7-15-2-10 8 4 8 15 10 25 2-4 6-11 10-19 10C8 48-2 35 1 18z" fill="url(#e2)" />
          <path d="M17 21c-8 9-2 24 12 26 7-1 12-5 15-10 1-2 0-2-1-2-9 4-19 3-23-4-2-4-2-7-3-10z" fill="#1555a0" />
        </svg>
      </Slot>
      <Slot>
        <svg viewBox="0 0 46 48" className="h-12 w-[46px]">
          <path d="M0 8h46v33q0 7-7 7H7q-7 0-7-7z" fill="#ececec" />
          <path d="M11 11V4q0-2.500 3-2.500h18q3 0 3 2.500v7" fill="none" stroke="#22a9f0" strokeWidth="3.600" />
          <path d="M13 17h9.500v9H13z" fill="#f25022" /><path d="M24 17h9.500v9H24z" fill="#7fba00" /><path d="M13 28h9.500v9H13z" fill="#00a4ef" /><path d="M24 28h9.500v9H24z" fill="#ffb900" />
        </svg>
      </Slot>
      <Slot dot>
        <svg viewBox="0 0 48 44" className="h-11 w-12">
          <rect x="11" y="1" width="37" height="42" rx="2" fill="#103f91" /><path d="M11 3q0-2 2-2h33q2 0 2 2v8.500H11z" fill="#41a5ee" /><path d="M11 11.500h37V22H11z" fill="#2b7cd3" /><path d="M11 22h37v10.500H11z" fill="#185abd" />
          <OfficeLetter color="#185abd" x={0} y={10}>W</OfficeLetter>
        </svg>
      </Slot>
      <Slot>
        <svg viewBox="0 0 48 44" className="h-11 w-12">
          <rect x="11" y="1" width="37" height="42" rx="2" fill="#185c37" /><path d="M11 3q0-2 2-2h16v10.500H11z" fill="#21a366" /><path d="M29 1h17q2 0 2 2v8.500H29z" fill="#33c481" /><path d="M11 11.500h18V22H11z" fill="#107c41" /><path d="M29 11.500h19V22H29z" fill="#21a366" /><path d="M29 22h19v10.500H29z" fill="#107c41" />
          <OfficeLetter color="#107c41" x={0} y={10}>X</OfficeLetter>
        </svg>
      </Slot>
      <Slot>
        <svg viewBox="0 0 48 48" className="mr-1.5 size-12">
          <path d="M34 20q-4-8-7-10 5 1 7 4-1-7-2-11 5 4 6 9 1-8 5-11-1 6-1 10 3-4 5-4-4 8-7 13z" fill="#2f7d1f" />
          <ellipse cx="35.500" cy="30" rx="9.500" ry="12.500" fill="#c98b1f" /><path d="M28 24l14 14M31 20l14 13M27 30l11 12M43 22L29 38M45 29L33 42M38 19L27 32" stroke="#6f4a0c" strokeWidth="1.200" />
          <path d="M9 12l5 13M22 10l-5 14" stroke="#e05a9a" strokeWidth="1.800" /><rect x="5" y="3" width="4" height="4" fill="#ef2fa0" /><path d="M16 8q6-6 11 2l-7 2z" fill="#49c425" /><circle cx="9" cy="12" r="3.500" fill="#d8c65a" />
          <path d="M4 18q11-4 22 0 1 12-8 16l-1 8h-4l-1-8Q3 30 4 18z" fill="#c9ccd6" opacity=".7" /><path d="M5 21h20q0 9-10 10Q5 30 5 21z" fill="#e0261b" /><path d="M6 26h18q-3 5-9 5t-9-5z" fill="#f78a2c" /><ellipse cx="15" cy="44" rx="7.500" ry="3" fill="#c9ccd6" />
        </svg>
      </Slot>
      <Slot active>
        <svg viewBox="0 0 48 48" className="size-12">
          <path d="M3.200 12A24 24 0 0 1 44.800 12H24A12 12 0 0 0 13.600 30z" fill="#e33b2e" />
          <path d="M44.800 12A24 24 0 0 1 24 48L34.400 30A12 12 0 0 0 24 12z" fill="#fcc21b" />
          <path d="M24 48A24 24 0 0 1 3.200 12L13.600 30A12 12 0 0 0 34.400 30z" fill="#229342" />
          <circle cx="24" cy="24" r="12" fill="#fff" /><circle cx="24" cy="24" r="9.800" fill="#2b7de9" />
        </svg>
      </Slot>
      <Slot>
        <svg viewBox="0 0 44 44" className="size-11">
          <circle cx="22" cy="22" r="20.500" fill="#231f20" stroke="#f2f2f2" strokeWidth="2.600" />
          <path d="M14 6q-3 13 7 16 11-3 17 8M22 22q-2 12-14 11M21 21q9-5 5-15" fill="none" stroke="#c4c4c4" strokeWidth="2.200" />
          <circle cx="22" cy="21.500" r="3" fill="#c4c4c4" />
        </svg>
      </Slot>
      <Slot>
        <svg viewBox="0 0 48 48" className="size-12">
          <rect width="48" height="48" rx="9" fill="#1d3a46" /><path d="M0 36h48v3q0 9-9 9H9q-9 0-9-9z" fill="#3d5663" />
          <path d="M21 5l6 7-6 6-5-7z" fill="#fff" /><path d="M27 12q6 3 6 7L22 31q-6-4-6-8z" fill="#48e5c2" />
          <path d="M18 39.500l3 5 3-5 3 5 3-5" stroke="#fff" strokeWidth="2.600" fill="none" />
        </svg>
      </Slot>
      <Slot>
        <svg viewBox="0 0 44 44" className="size-11">
          <rect y="0.500" width="44" height="43" rx="8" fill="#fff" />
          <path d="M36 13L21.500 19M36 31L9 17v-5.500h22.500V18M36 13.500L9 27v5.500h22.500V26" fill="none" stroke="#000" strokeWidth="3.600" />
        </svg>
      </Slot>
      <Slot>
        <FaWhatsapp size={54} color="#27d366" />
        <div className="absolute top-1.5 right-1.5 flex size-8 items-center justify-center rounded-full bg-[#5ac8fb] font-['Open_Sans'] text-[21px] leading-none text-black">8</div>
      </Slot>
      <Slot>
        <svg viewBox="0 0 48 44" className="h-11 w-12">
          <path d="M6 26C2-8 46-8 42 26" fill="none" stroke="#0a12e8" strokeWidth="3.600" />
          <path d="M11 38V22l2-4 2 2 1-6 3 3 2-5 2 4 2-6 2 6 2-3 2 5 2-2 1 5 2-2 2 8v12l-4 2-3 1-3-1-2 3-3-3-4 2-3-2z" fill="#e3a71f" />
          <path d="M12 31v-4l3-1 1-3 2 3 2-4 2 4 2-3 3 3 2-3 2 3 3-1 3 2v4l-3-1-2 3-3-3-2 4-3-3-3 3-2-3-3 2-2-2z" fill="#f51515" />
          <path d="M10 24v17Q0 40 0 32t10-8zM38 24v17q10-1 10-9t-10-8z" fill="#0a12e8" />
        </svg>
      </Slot>
      <Slot>
        <svg viewBox="0 0 100 100" className="size-12">
          <path fill="#0065a9" d="M96.460 10.800L75.860.88a6.230 6.230 0 0 0-7.110 1.200L1.300 63.580a4.170 4.170 0 0 0 0 6.170l5.510 5a4.170 4.170 0 0 0 5.320.24L93.360 13.370C96.090 11.300 100 13.250 100 16.670v-.24c0-2.400-1.380-4.590-3.540-5.630z" />
          <path fill="#007acc" d="M96.460 89.200l-20.600 9.920a6.230 6.230 0 0 1-7.110-1.200L1.300 36.420a4.170 4.170 0 0 1 0-6.170l5.510-5a4.170 4.170 0 0 1 5.320-.24l81.230 61.620c2.730 2.070 6.640.12 6.640-3.300v.24c0 2.400-1.380 4.590-3.540 5.630z" />
          <path fill="#1f9cf0" d="M75.860 99.130a6.230 6.230 0 0 1-7.110-1.210c2.310 2.300 6.250.67 6.250-2.590V4.670c0-3.260-3.940-4.890-6.250-2.590A6.230 6.230 0 0 1 75.860.87l20.600 9.910A6.250 6.250 0 0 1 100 16.410v67.180a6.250 6.250 0 0 1-3.540 5.630z" />
        </svg>
      </Slot>
    </div>
    <div className="ml-auto flex items-center *:shrink-0">
      <div className="flex w-16 justify-center"><svg viewBox="0 0 26 14" className="w-[26px]" fill="none" stroke="#fff" strokeWidth="2"><path d="M1 13.500L13 1l12 12.500" /></svg></div>
      <div className="flex w-16 justify-center"><svg viewBox="0 0 32 26" className="w-8"><path d="M7 22a7 7 0 0 1 0-12C9-1 24-1 25 10c8 0 9 12 1 12z" fill="#8d96ae" /><path d="M4 0l26 25" stroke="#11234e" strokeWidth="5" /><path d="M4 0l26 25" stroke="#fff" strokeWidth="2" /></svg></div>
      <div className="flex w-16 justify-center"><svg viewBox="0 0 34 28" className="mt-1 w-[34px]"><path d="M7 20a7 7 0 0 1 0-12C9-2 24-2 25 8c6 0 8 12 1 12z" fill="#b7bdcc" /><circle cx="24" cy="19" r="9" fill="#5ac8fb" /><path d="M24 17v7M24 13v2" stroke="#11234e" strokeWidth="2.400" /></svg></div>
      <div className="flex w-16 justify-center"><svg viewBox="0 0 32 34" className="w-8" fill="none" stroke="#fff" strokeWidth="2.200"><path d="M1 18C0 2 22-4 28 9M29 1v9h-9M2 33v-8h8M3 26q4 6 12 7" /><circle cx="24" cy="25" r="8.200" fill="#ff0d0d" stroke="none" /></svg></div>
      <div className="flex w-16 justify-center"><svg viewBox="0 0 32 24" className="w-8" fill="none" stroke="#fff" strokeWidth="2.200"><path d="M1 9q15-15 30 0M5.500 13.500q10.500-10.500 21 0M10 18q6-6 12 0" /><circle cx="16" cy="21" r="2.600" fill="#fff" stroke="none" /></svg></div>
      <div className="flex w-8 justify-center"><svg viewBox="0 0 34 28" className="w-[34px] shrink-0" fill="none" stroke="#fff" strokeWidth="2"><path d="M1.500 9.500H6l7-6.500v22l-7-6.500H1.500zM17.500 9q3.500 5 0 10M22 5.500q6.500 8.500 0 17M26.500 1.500q9.500 12.500 0 25" strokeLinejoin="round" /></svg></div>
      <div className="w-[137px] text-right font-['Open_Sans'] text-[23px] leading-8">
        <div className="tracking-[-0.55px]">3:13 AM</div><div className="tracking-[-0.3px]">7/19/2025</div>
      </div>
      <div className="mr-9 ml-[11px] flex h-8 w-10 items-center justify-center rounded-full bg-[#5ac8fb] font-['Open_Sans'] text-[20px] leading-none text-black">10</div>
    </div>
  </div>
);

export default function App() {
  return (
    <div className="flex h-[1440px] w-[2560px] flex-col overflow-hidden bg-white">
      <TabStrip />
      <AddressBar />
      <Header />
      <div className="flex min-h-0 flex-1">
        <Rail />
        <StylePanel />
        <Canvas />
      </div>
      <Taskbar />
    </div>
  );
}
